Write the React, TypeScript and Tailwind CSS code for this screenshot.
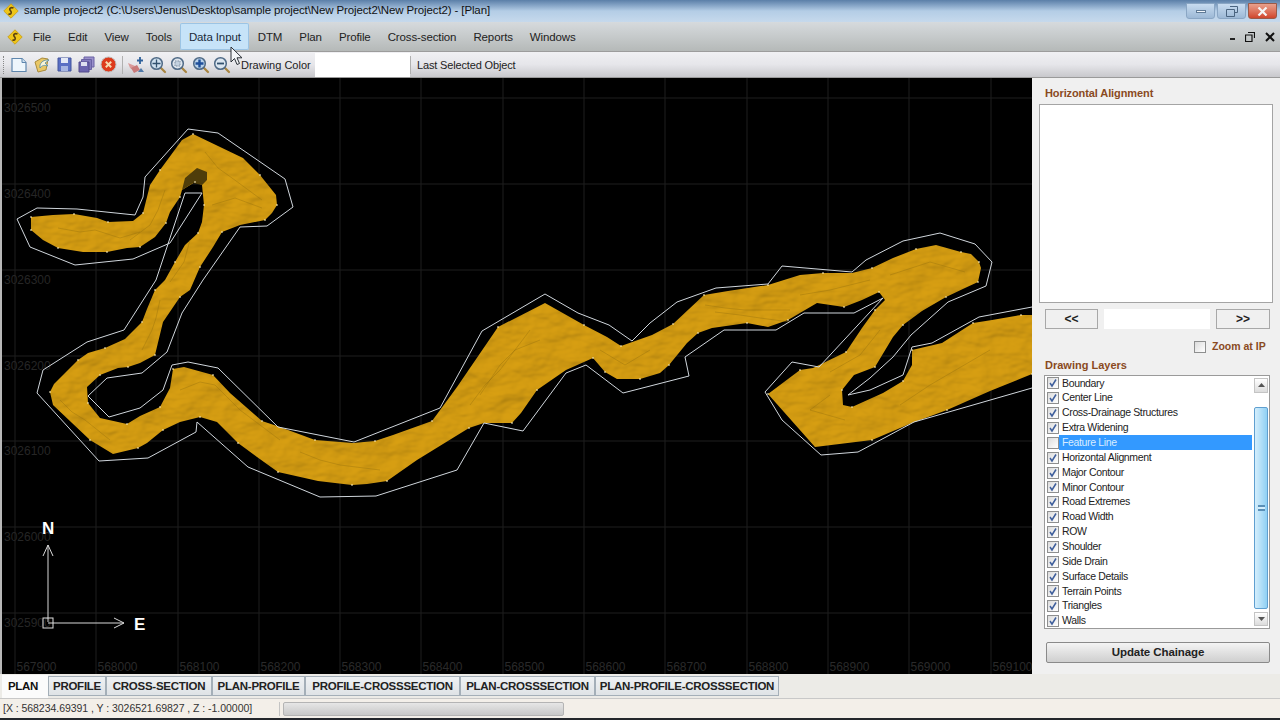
const road = "31,217 53,215 74,214 97,218 108,222 133,221 143,213 150,185 160,170 182,140 193,134 243,158 260,175 276,195 277,205 272,213 265,220 240,225 222,232 213,247 200,267 190,290 180,297 163,322 155,355 140,363 128,367 118,368 100,375 87,387 88,403 100,418 127,424 140,416 160,407 170,388 173,369 184,367 213,375 230,393 262,421 280,427 315,440 353,443 375,441 393,435 432,421 457,387 498,327 545,303 584,325 607,337 621,346 652,335 673,324 689,309 704,295 728,291 768,285 800,275 823,273 852,273 872,268 893,258 916,249 936,245 961,252 971,254 979,262 981,268 978,282 965,288 946,297 922,311 903,325 893,337 875,367 854,375 842,390 843,405 852,407 883,393 903,381 912,365 912,350 942,343 973,323 992,320 1021,315 1032,315 1032,374 990,391 947,410 912,423 872,440 815,447 768,394 780,385 800,370 813,368 846,352 862,328 875,310 885,300 879,292 862,300 844,307 817,303 788,320 768,327 747,323 712,328 698,333 687,343 669,365 660,373 640,379 617,379 605,372 599,365 593,358 566,370 537,390 521,413 512,423 484,423 469,428 417,460 387,481 367,484 352,485 318,481 278,472 257,457 238,443 217,422 200,417 180,422 163,430 147,443 138,448 113,454 90,440 53,405 50,392 54,384 78,360 88,353 105,348 125,339 142,322 147,309 155,290 165,280 175,262 185,245 198,233 202,222 204,205 202,185 195,182 182,190 180,197 170,212 166,223 155,237 140,247 127,248 107,252 83,252 58,248 43,240 31,230";

const outlineA = "17,219 37,208 77,209 135,215 143,197 145,177 188,129 218,133 285,179 293,207 267,226 240,227 203,280 182,313 167,352 142,373 107,378 88,396 109,417 140,408 163,390 172,365 188,362 218,368 278,427 354,442 440,408 482,331 545,294 578,313 609,325 632,341 650,323 677,302 716,288 768,284 782,266 852,272 866,260 903,241 940,233 975,244 992,262 986,286 948,302 911,335 893,357 870,378 848,395 870,390 903,375 912,347 932,343 979,317 1032,307";
const outlineB = "1032,388 914,422 858,452 821,455 782,420 765,392 792,362 819,367 883,298 854,313 804,313 776,330 724,330 685,357 689,376 623,393 586,365 566,373 523,431 484,423 457,470 376,496 320,497 248,467 197,422 196,432 148,458 99,461 37,393 43,370 87,342 124,330 156,280 185,193 202,193 170,243 133,259 75,265 30,247 17,219";

const wrinkles = [
  "58,228 80,232 95,230 120,238 140,232",
  "165,190 158,210 150,225 130,240",
  "205,152 218,168 232,178 262,200",
  "212,205 235,198 262,208",
  "190,240 184,262 170,282",
  "160,300 156,318 152,330 142,350",
  "60,400 72,412 85,420 110,440",
  "180,390 200,382 215,385 240,410 280,440",
  "300,452 320,460 340,465 380,470",
  "470,405 485,385 500,370 530,330",
  "480,395 500,365 515,350 540,340",
  "600,350 625,365 650,350",
  "705,305 725,308 745,310 790,310",
  "715,312 740,315 760,318 790,322",
  "800,295 830,290 870,280",
  "890,275 930,262 965,272",
  "880,330 860,355 830,372",
  "830,395 810,410 845,420",
  "900,405 930,385 990,350",
];

const dots = road.split(" ").filter((_, i) => i % 2 === 0).map((p) => p.split(",").map(Number));

const gridX = [15, 96, 178, 259, 340, 421, 503, 584, 665, 747, 828, 909, 991];
const gridY = [98, 184, 270, 356, 441, 527, 613];
const labelsY = ["3026500", "3026400", "3026300", "3026200", "3026100", "3026000", "3025900"];

const layers = [
  "Boundary", "Center Line", "Cross-Drainage Structures", "Extra Widening", "Feature Line",
  "Horizontal Alignment", "Major Contour", "Minor Contour", "Road Extremes", "Road Width",
  "ROW", "Shoulder", "Side Drain", "Surface Details", "Terrain Points", "Triangles", "Walls",
];

const menus = ["File", "Edit", "View", "Tools", "Data Input", "DTM", "Plan", "Profile", "Cross-section", "Reports", "Windows"];

const tabs = [
  { name: "PROFILE", w: "w-[58px]" },
  { name: "CROSS-SECTION", w: "w-[106px]" },
  { name: "PLAN-PROFILE", w: "w-[93px]" },
  { name: "PROFILE-CROSSSECTION", w: "w-[155px]" },
  { name: "PLAN-CROSSSECTION", w: "w-[135px]" },
  { name: "PLAN-PROFILE-CROSSSECTION", w: "w-[184px]" },
];

const Logo = () => (
  <svg width="16" height="16" viewBox="0 0 16 16">
    <path d="M8 .8 15.200 8 8 15.200 .8 8Z" fill="#eec61a" stroke="#c79a12" strokeWidth="0.8" strokeLinejoin="round" />
    <path d="M10.500 5C8 3.800 5.500 5.500 7.500 7.800 9.500 10 7.500 12 5.500 10.800" fill="none" stroke="#5c4310" strokeWidth="1.700" />
  </svg>
);

const Magnifier = ({ children, fill = "#cfe0ef" }: { children?: React.ReactNode; fill?: string }) => (
  <svg width="18" height="18" viewBox="0 0 18 18">
    <path d="M11.500 11.500 16 16" stroke="#a8843f" strokeWidth="2.200" strokeLinecap="round" />
    <circle cx="7.500" cy="7.500" r="5.800" fill={fill} stroke="#4f6a86" strokeWidth="1.500" />
    {children}
  </svg>
);

const Toolbar = () => (
  <div className="flex h-[26px] items-center border-b border-[#9a9a9a] bg-gradient-to-b from-[#f0f0f3] via-[#e6e6ea] to-[#c8c8cc]">
    <div className="ml-[3px] h-[18px] w-[3px] border-l border-dotted border-[#888]" />
    <div className="ml-[4px] flex w-[112px] items-center gap-[5px]">
      <svg width="18" height="18" viewBox="0 0 18 18">
        <path d="M2 2.500H12L16 6.500V15.500H2Z" fill="#eef6fc" stroke="#5f86ad" strokeWidth="1.200" />
        <path d="M12 2.500V6.500H16" fill="#cfe2f2" stroke="#5f86ad" />
      </svg>
      <svg width="18" height="18" viewBox="0 0 18 18">
        <path d="M2 6 9 2 15 3 13 14 5 16Z" fill="#e9c766" stroke="#a98a3a" />
        <path d="M7 9C9 4 13 4 16 4L12 7 15 10C12 9 9 9 7 12Z" fill="#f8f4d8" stroke="#4f8aa8" strokeWidth="0.8" />
      </svg>
      <svg width="17" height="17" viewBox="0 0 17 17">
        <path d="M2 2H15V15H2Z" fill="#5a6fc4" stroke="#42549c" />
        <path d="M5 2H12V7H5Z" fill="#e4e9f6" />
        <path d="M5 10H12V15H5Z" fill="#a7b5e2" />
      </svg>
      <svg width="17" height="17" viewBox="0 0 17 17">
        <path d="M6 1H16V11H6Z" fill="#9a90cc" stroke="#6a62a4" />
        <path d="M3.500 3.500H13.500V13.500H3.500Z" fill="#857cbe" stroke="#6a62a4" />
        <path d="M1 6H11V16H1Z" fill="#6c64ae" stroke="#524a8c" />
        <path d="M3 6H9V10H3Z" fill="#dfe0f0" />
      </svg>
      <svg width="17" height="17" viewBox="0 0 17 17">
        <circle cx="8.500" cy="8.500" r="7.500" fill="#dd3a1c" stroke="#bdbdbd" />
        <path d="M5.800 5.800 11.200 11.200M11.200 5.800 5.800 11.200" stroke="#f6d8b0" strokeWidth="2" />
      </svg>
    </div>
    <div className="h-[18px] border-l border-[#b0b0b0]" />
    <div className="ml-[4px] flex items-center gap-[3.500px]">
      <svg width="18" height="18" viewBox="0 0 18 18">
        <path d="M1 7 8 10 6 14 3 12Z" fill="#d99a9a" />
        <path d="M4 12 10 9 13 14 7 17Z" fill="#c97a7a" />
        <path d="M13 1V8M10 4.500H16" stroke="#2c5f9a" strokeWidth="1.800" />
        <path d="M14 12 17 16H11Z" fill="#4f78a8" />
      </svg>
      <Magnifier>
        <path d="M7.500 3.500V11.500M3.500 7.500H11.500" stroke="#33526f" strokeWidth="1.300" />
      </Magnifier>
      <Magnifier fill="#dfe6ee">
        <path d="M5 5H10V10H5Z" fill="#c4d2e0" stroke="#7d8ea0" strokeDasharray="1.500 1" />
      </Magnifier>
      <Magnifier fill="#b9d2ea">
        <path d="M7.500 3.500V11.500M3.500 7.500H11.500" stroke="#1f4f9a" strokeWidth="2.400" />
      </Magnifier>
      <Magnifier fill="#dbe6f0">
        <path d="M4 7.500H11" stroke="#33526f" strokeWidth="1.800" />
      </Magnifier>
    </div>
    <span className="ml-[10px] mt-[1px] w-[74px] whitespace-nowrap text-[11px] text-[#222]">Drawing Color</span>
    <div className="h-[24px] w-[95px] bg-white" />
    <div className="h-[18px] border-l border-[#b0b0b0]" />
    <span className="ml-[6px] mt-[1px] whitespace-nowrap text-[11px] tracking-[-0.15px] text-[#222]">Last Selected Object</span>
  </div>
);

const Canvas = () => (
  <svg className="block" width="1030" height="596" viewBox="2 78 1030 596">
    <defs>
      <filter id="terrain" x="0" y="0" width="1040" height="600" filterUnits="userSpaceOnUse" colorInterpolationFilters="sRGB">
        <feTurbulence type="fractalNoise" baseFrequency="0.035 0.06" numOctaves="3" seed="4" result="noise" />
        <feDiffuseLighting in="noise" surfaceScale="1.800" lightingColor="#d89f12" result="lit">
          <feDistantLight azimuth="50" elevation="74" />
        </feDiffuseLighting>
        <feComposite in="lit" in2="SourceAlpha" operator="in" />
      </filter>
    </defs>
    <rect x="2" y="78" width="1030" height="596" fill="#000" />
    {gridX.map((x) => (
      <line key={x} x1={x} x2={x} y1="78" y2="674" stroke="#1f1f1f" />
    ))}
    {gridY.map((y) => (
      <line key={y} x1="2" x2="1032" y1={y} y2={y} stroke="#1f1f1f" />
    ))}
    {labelsY.map((t, i) => (
      <text key={t} x="4" y={gridY[i] + 14} fill="#262626" fontSize="12" fontFamily="Liberation Sans, sans-serif">{t}</text>
    ))}
    {gridX.map((x, i) => (
      <text key={x} x={x + 1.5} y="671" fill="#2a2a2a" fontSize="12" fontFamily="Liberation Sans, sans-serif">{567900 + i * 100}</text>
    ))}
    <polygon points={road} fill="#c8930f" filter="url(#terrain)" />
    {wrinkles.map((w) => (
      <polyline key={w} points={w} fill="none" stroke="#96700c" strokeOpacity="0.4" strokeWidth="1" />
    ))}
    <path d="M182 190 185 178 197 168 207 172 207 180 202 185 193 183Z" fill="#4f3d0a" />
    <polyline points={outlineA} fill="none" stroke="#d0d6dc" />
    <polyline points={outlineB} fill="none" stroke="#d0d6dc" />
    {dots.map(([x, y]) => (
      <rect key={`${x}-${y}`} x={x - 0.7} y={y - 0.7} width="1.400" height="1.400" fill="#fff3c8" />
    ))}
    <path d="M48 622V545M43 556 48 545 53 556M48 623H124M114 618 124 623 114 628" fill="none" stroke="#d8d8d8" />
    <rect x="43" y="618" width="10" height="10" fill="none" stroke="#e0e0e0" />
    <text x="42" y="534" fill="#fff" fontSize="17" fontWeight="700" fontFamily="Liberation Sans, sans-serif">N</text>
    <text x="134" y="630" fill="#fff" fontSize="17" fontWeight="700" fontFamily="Liberation Sans, sans-serif">E</text>
  </svg>
);

const Check = ({ on }: { on: boolean }) => (
  <span className="flex h-[12px] w-[12px] items-center justify-center border border-[#8e8f8f] bg-gradient-to-br from-[#dcdcdc] to-white">
    {on && (
      <svg width="10" height="10" viewBox="0 0 10 10">
        <path d="M2 5 4 8 8 1.500" fill="none" stroke="#3f5f9c" strokeWidth="1.500" />
      </svg>
    )}
  </span>
);

const Button = ({ label, className }: { label: string; className: string }) => (
  <button className={`flex items-center justify-center border border-[#a8a8a8] bg-[#f0f0f0] text-[12px] font-bold text-[#222] ${className}`}>
    {label}
  </button>
);

const SidePanel = () => (
  <div className="flex w-[248px] flex-col bg-[#f0f0f0] pl-[7px]">
    <div className="ml-[6px] mt-[8px] h-[18px] text-[11px] font-bold leading-[14px] tracking-[-0.1px] text-[#8a4a1e]">Horizontal Alignment</div>
    <div className="h-[199px] w-[234px] border border-[#a4a4a4] bg-white" />
    <div className="ml-[6px] mt-[6px] flex h-[20px] w-[225px] justify-between">
      <Button label="<<" className="w-[53px]" />
      <div className="w-[106px] bg-white" />
      <Button label=">>" className="w-[54px]" />
    </div>
    <div className="mt-[11px] flex h-[14px] items-center justify-end pr-[13px]">
      <Check on={false} />
      <span className="ml-[6px] w-[55px] whitespace-nowrap text-[10.500px] font-bold text-[#8a4a1e]">Zoom at IP</span>
    </div>
    <div className="ml-[6px] mt-[4px] h-[15px] text-[11px] font-bold leading-[14px] text-[#8a4a1e]">Drawing Layers</div>
    <div className="ml-[5px] mt-[2px] flex h-[254px] w-[226px] border border-[#9a9a9a] bg-white">
      <div className="flex-1 pl-[1px]">
        {layers.map((name) => {
          const selected = name === "Feature Line";
          return (
            <div key={name} className="flex h-[14.870px] items-center">
              <span className="ml-[1px]"><Check on={!selected} /></span>
              <span className={`flex h-full w-[193px] items-center pl-[3px] text-[10.500px] tracking-[-0.35px] ${selected ? "bg-[#3399ff] text-[#d8ecff]" : "text-[#222]"}`}>{name}</span>
            </div>
          );
        })}
      </div>
      <div className="flex w-[15px] flex-col py-[2px] pr-[1px]">
        <div className="flex h-[15px] items-center justify-center border border-[#c4c4c4] bg-gradient-to-b from-white to-[#dcdcdc]">
          <svg width="7" height="4" viewBox="0 0 7 4"><path d="M0 4 3.500 0 7 4Z" fill="#555" /></svg>
        </div>
        <div className="mt-[14px] flex h-[203px] items-center justify-center rounded-[2px] border border-[#5f9fd0] bg-gradient-to-r from-[#d4eefc] to-[#8fd0f4]">
          <div className="h-[6px] w-[7px] border-y-2 border-[#5a90b8] bg-[#d4eefc]" />
        </div>
        <div className="mt-[3px] flex h-[14px] items-center justify-center border border-[#c4c4c4] bg-gradient-to-b from-white to-[#dcdcdc]">
          <svg width="7" height="4" viewBox="0 0 7 4"><path d="M0 0 3.500 4 7 0Z" fill="#555" /></svg>
        </div>
      </div>
    </div>
    <button className="ml-[7px] mt-[13px] h-[21px] w-[224px] rounded-[2px] border border-[#8a8a8a] bg-gradient-to-b from-[#f4f4f4] to-[#cfcfcf] text-[11.500px] font-bold tracking-[-0.1px] text-[#222]">
      Update Chainage
    </button>
  </div>
);

export default function App() {
  return (
    <div className="relative flex h-[720px] w-[1280px] flex-col overflow-hidden bg-[#f0f0f0] font-['Liberation_Sans',sans-serif]">
      <div className="flex h-[22px] items-center bg-gradient-to-b from-[#5b7fa8] via-[#b4cde6] to-[#c6d9ec] pl-[3px]">
        <Logo />
        <span className="ml-[5px] flex-1 text-[11.500px] tracking-[-0.12px] text-[#111]">
          sample project2 (C:\Users\Jenus\Desktop\sample project\New Project2\New Project2) - [Plan]
        </span>
        <div className="flex items-center gap-[2px] pr-[3px]">
          <div className="flex h-[16px] w-[29px] items-center justify-center rounded-b-[3px] border border-[#8aa6c4] bg-gradient-to-b from-[#c8dcf0] to-[#9db9d6]">
            <div className="h-[3px] w-[10px] border border-[#5f7a96] bg-[#f3f7fb]" />
          </div>
          <div className="flex h-[16px] w-[29px] items-center justify-center rounded-b-[3px] border border-[#8aa6c4] bg-gradient-to-b from-[#c8dcf0] to-[#9db9d6]">
            <svg width="12" height="11" viewBox="0 0 12 11"><path d="M4 .500H11.500V6.500H9M.500 3.500H8.500V10.500H.500Z" fill="none" stroke="#4a6480" /></svg>
          </div>
          <div className="flex h-[16px] w-[29px] items-center justify-center rounded-b-[3px] border border-[#9a5a48] bg-gradient-to-b from-[#e8a08c] to-[#d0452c]">
            <svg width="11" height="9" viewBox="0 0 11 9"><path d="M1.500 .500 9.500 8.500M9.500 .500 1.500 8.500" stroke="#f5f5f5" strokeWidth="2.200" /></svg>
          </div>
        </div>
      </div>
      <div className="flex h-[30px] items-center border-b border-[#9c9c9c] bg-gradient-to-b from-[#d6dadd] via-[#c6cacb] to-[#b5b9b8] pl-[7px]">
        <Logo />
        <div className="ml-[1.500px] flex flex-1 items-center">
          {menus.map((m) => (
            <span
              key={m}
              className={`flex h-[27px] items-center whitespace-nowrap px-[8.500px] pt-[2px] text-[11.500px] tracking-[-0.12px] ${m === "Data Input" ? "rounded-[2px] bg-[#c6e3f8] text-[#1a2a3a] shadow-[inset_0_0_0_1px_#9cc4e4]" : "text-[#222]"}`}
            >
              {m}
            </span>
          ))}
        </div>
        <div className="flex items-center gap-[10px] pr-[5px]">
          <div className="mt-[5px] h-[2px] w-[5px] bg-[#222]" />
          <svg width="10" height="10" viewBox="0 0 10 10"><path d="M3 .500H9.500V6M.500 3H7V9.500H.500Z" fill="none" stroke="#111" strokeWidth="1.200" /></svg>
          <svg width="10" height="10" viewBox="0 0 10 10"><path d="M1 1 9 9M9 1 1 9" stroke="#111" strokeWidth="2" /></svg>
        </div>
      </div>
      <Toolbar />
      <div className="flex h-[596px]">
        <div className="w-[2px] bg-[#b8b8b8]" />
        <Canvas />
        <SidePanel />
      </div>
      <div className="flex h-[25px] items-center border-b border-[#c8c8c8] bg-[#ecebe7] pl-[2px]">
        <span className="flex h-[23px] w-[46px] items-center bg-[#fbfbfb] pl-[6px] pt-[1px] text-[11.500px] font-bold tracking-[-0.35px] text-[#111]">PLAN</span>
        {tabs.map((t) => (
          <span key={t.name} className={`flex h-[20px] items-center justify-center whitespace-nowrap border border-[#a4afb8] bg-gradient-to-b from-[#eef1f3] to-[#dfe3e6] pt-[2px] text-[11.500px] font-bold tracking-[-0.26px] text-[#222] ${t.w}`}>
            {t.name}
          </span>
        ))}
      </div>
      <div className="flex h-[19px] items-center bg-[#f3efe9] pl-[3px]">
        <span className="w-[276px] text-[10.500px] tracking-[-0.04px] text-[#333]">[X : 568234.69391 , Y : 3026521.69827 , Z : -1.00000]</span>
        <div className="h-[14px] border-l border-[#c4c4c4]" />
        <div className="ml-[3px] h-[14px] w-[281px] rounded-[2px] border border-[#b4b4b4] bg-gradient-to-b from-[#e6e6e6] to-[#c8c8c8]" />
      </div>
      <div className="flex-1 bg-[#23262b]" />
      <svg className="absolute left-[230px] top-[46px]" width="14" height="20" viewBox="0 0 14 20">
        <path d="M1 1V16L4.500 12.500 7 18.500 9.500 17.500 7 11.800H12Z" fill="#f4f6f8" stroke="#2a2f36" strokeWidth="1" strokeLinejoin="round" />
      </svg>
    </div>
  );
}
